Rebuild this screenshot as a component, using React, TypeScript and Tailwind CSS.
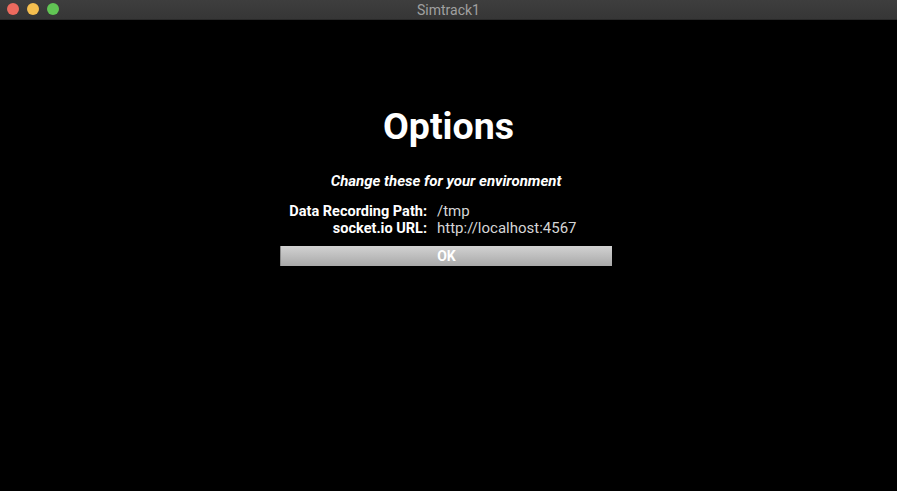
export default function App() {
  return (
    <div className="w-[897px] h-[491px] bg-black flex flex-col overflow-hidden" style={{ fontFamily: 'Roboto, "Liberation Sans", sans-serif' }}>
      <div className="h-[20px] shrink-0 relative flex items-center justify-center bg-gradient-to-b from-[#3e3e3e] to-[#363636] border-b border-[#2a2a2a]">
        <div className="absolute left-[7px] top-[3px] flex gap-[8px]">
          <span className="w-[12px] h-[12px] rounded-full bg-[#ed6a5e]" />
          <span className="w-[12px] h-[12px] rounded-full bg-[#f5bf4f]" />
          <span className="w-[12px] h-[12px] rounded-full bg-[#61c554]" />
        </div>
        <span className="text-[14px] text-[#a0a0a0] leading-none">Simtrack1</span>
      </div>

      <div className="flex flex-col items-center pt-[88px]">
        <h1 className="text-[37.5px] font-bold text-white leading-none">Options</h1>
      </div>

      <div className="flex justify-center pr-[5px] mt-[27px]">
        <div className="w-[332px] flex flex-col">
          <p className="text-[15px] font-bold italic text-white text-center leading-[17px]">Change these for your environment</p>
          <div className="grid grid-cols-[152px_1fr] mt-[13px] text-[15px] leading-[17px]">
            <span className="font-bold text-white text-right pr-[5px] text-[14.5px]">Data Recording Path:</span>
            <span className="text-[#d6d6d6] pl-[5px]">/tmp</span>
            <span className="font-bold text-white text-right pr-[5px] text-[14.5px]">socket.io URL:</span>
            <span className="text-[#d6d6d6] pl-[5px]">http://localhost:4567</span>
          </div>
          <button className="mt-[9px] h-[20px] w-full bg-gradient-to-b from-[#d2d2d2] to-[#a9a9a9] border-l border-[#8a8a8a] text-white font-bold text-[14px] leading-none">
            OK
          </button>
        </div>
      </div>
    </div>
  );
}
